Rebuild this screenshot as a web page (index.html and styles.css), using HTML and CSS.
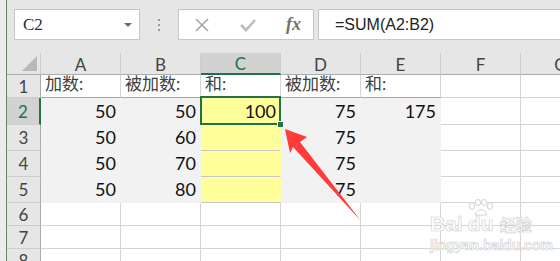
FILE: index.html
```html
<!DOCTYPE html>
<html lang="zh-CN">
<head>
    <meta charset="UTF-8">
    <title>SUM - 工作表</title>
    <link rel="stylesheet" href="styles.css">
</head>
<body>
    <div class="app">
        <div class="edge"></div>
        <div class="main">
            <div class="toolbar">
                <div class="name-box">
                    <span>C2</span>
                    <span class="drop"></span>
                </div>
                <div class="grip"><i></i><i></i><i></i></div>
                <div class="buttons">
                    <svg class="ico" width="14" height="14" viewBox="0 0 14 14">
                        <path d="M1 1 L13 13 M13 1 L1 13" stroke="#a6a6a6" stroke-width="1.6" fill="none"/>
                    </svg>
                    <svg class="ico" width="16" height="14" viewBox="0 0 16 14">
                        <path d="M1 7 L6 12 L15 2" stroke="#bcbcbc" stroke-width="2.6" fill="none"/>
                    </svg>
                    <span class="fx">fx</span>
                </div>
                <div class="formula">=SUM(A2:B2)</div>
            </div>

            <div class="sheet">
                <!-- column headers -->
                <div class="hd corner">
                    <svg width="15" height="15" viewBox="0 0 15 15"><polygon points="15,0 15,15 0,15" fill="#b8b8b8"/></svg>
                </div>
                <div class="hd">A</div>
                <div class="hd">B</div>
                <div class="hd on">C</div>
                <div class="hd">D</div>
                <div class="hd">E</div>
                <div class="hd">F</div>
                <div class="hd">G</div>

                <!-- row 1 -->
                <div class="rh">1</div>
                <div class="c lbl top">加数:</div>
                <div class="c lbl top">被加数:</div>
                <div class="c lbl top">和:</div>
                <div class="c lbl top">被加数:</div>
                <div class="c lbl top">和:</div>
                <div class="c"></div>
                <div class="c"></div>

                <!-- row 2 -->
                <div class="rh on">2</div>
                <div class="c fill num">50</div>
                <div class="c fill num">50</div>
                <div class="c yel num sel">100</div>
                <div class="c fill num">75</div>
                <div class="c fill num">175</div>
                <div class="c"></div>
                <div class="c"></div>

                <!-- row 3 -->
                <div class="rh">3</div>
                <div class="c fill num">50</div>
                <div class="c fill num">60</div>
                <div class="c yel"></div>
                <div class="c fill num">75</div>
                <div class="c fill"></div>
                <div class="c"></div>
                <div class="c"></div>

                <!-- row 4 -->
                <div class="rh">4</div>
                <div class="c fill num">50</div>
                <div class="c fill num">70</div>
                <div class="c yel"></div>
                <div class="c fill num">75</div>
                <div class="c fill"></div>
                <div class="c"></div>
                <div class="c"></div>

                <!-- row 5 -->
                <div class="rh">5</div>
                <div class="c fill num">50</div>
                <div class="c fill num">80</div>
                <div class="c yel"></div>
                <div class="c fill num">75</div>
                <div class="c fill"></div>
                <div class="c"></div>
                <div class="c"></div>

                <!-- rows 6-8 -->
                <div class="rh">6</div>
                <div class="c"></div><div class="c"></div><div class="c"></div><div class="c"></div>
                <div class="c"></div><div class="c"></div><div class="c"></div>

                <div class="rh">7</div>
                <div class="c"></div><div class="c"></div><div class="c"></div><div class="c"></div>
                <div class="c"></div><div class="c"></div><div class="c"></div>

                <div class="rh">8</div>
                <div class="c"></div><div class="c"></div><div class="c"></div><div class="c"></div>
                <div class="c"></div><div class="c"></div><div class="c"></div>
            </div>
        </div>

        <!-- red pointer drawn over the sheet -->
        <svg class="arrow" width="560" height="261" viewBox="0 0 560 261">
            <polygon points="285,129 307,137 300,142 361,221 293,147 290,153" fill="#ff3b3b"/>
        </svg>

        <div class="watermark">
            <div class="wm-logo">
                <span>Bai</span>
                <span class="paw-du">
                    <svg class="paw" width="28" height="17" viewBox="0 0 28 17">
                        <ellipse cx="5" cy="7" rx="2.6" ry="3.4" />
                        <ellipse cx="11" cy="3.5" rx="2.6" ry="3" />
                        <ellipse cx="17" cy="3.5" rx="2.6" ry="3" />
                        <ellipse cx="23" cy="7" rx="2.6" ry="3.4" />
                        <path d="M8 16 C10 9 18 9 20 16 Z" />
                    </svg>
                    <span>du</span>
                </span>
                <span class="wm-cn">经验</span>
            </div>
            <div class="wm-url">jingyan.baidu.com</div>
        </div>
    </div>
</body>
</html>
```

FILE: styles.css
```css
body {
    margin: 0;
    background-color: #e6e6e6;
    font-family: "Lato", "Noto Sans CJK SC", sans-serif;
}
.app {
    position: relative;
    display: flex;
    width: 560px;
    height: 261px;
    overflow: hidden;
}
.edge {
    flex: none;
    width: 6px;
    background: #ececec;
    border-right: 1px solid #5d8a6b;
}
.main {
    flex: 1;
    min-width: 0;
}

/* formula bar */
.toolbar {
    display: flex;
    align-items: flex-start;
    height: 53px;
    padding: 9px 0 0 7px;
    box-sizing: border-box;
}
.name-box {
    display: flex;
    align-items: center;
    justify-content: space-between;
    width: 126px;
    height: 31px;
    padding: 0 7px 0 8px;
    box-sizing: border-box;
    background: white;
    border: 1px solid #c6c6c6;
    font-family: "Liberation Serif", serif;
    font-size: 17px;
    color: #2a2a3a;
}
.drop {
    width: 0;
    height: 0;
    border-left: 4px solid transparent;
    border-right: 4px solid transparent;
    border-top: 4px solid #6e6e6e;
}
.grip {
    display: flex;
    flex-direction: column;
    gap: 3px;
    margin: 10px 0 0 18px;
}
.grip i {
    display: block;
    width: 2px;
    height: 2px;
    background: #9a9a9a;
}
.buttons {
    display: flex;
    align-items: center;
    width: 136px;
    height: 31px;
    margin-left: 18px;
    padding-left: 16px;
    box-sizing: border-box;
    background: white;
    border: 1px solid #c6c6c6;
}
.ico {
    display: block;
}
.ico + .ico {
    margin-left: 31px;
}
.fx {
    margin-left: 30px;
    font-family: "Liberation Serif", serif;
    font-style: italic;
    font-weight: bold;
    font-size: 18px;
    color: #707070;
}
.formula {
    flex: 1;
    height: 31px;
    margin: 0 -10px 0 4px;
    padding-left: 16px;
    box-sizing: border-box;
    background: white;
    border: 1px solid #c6c6c6;
    font-family: "Liberation Sans", sans-serif;
    font-size: 16px;
    line-height: 30px;
    color: #222;
}

/* worksheet */
.sheet {
    display: grid;
    grid-template-columns: 34px repeat(7, 80px);
    grid-template-rows: 22px 23px 27px 26px 26px 26px 23px 23px 23px;
    background: white;
}
.hd, .rh {
    display: flex;
    align-items: center;
    justify-content: center;
    box-sizing: border-box;
    background: #e6e6e6;
    color: #444;
    font-size: 17px;
}
.hd {
    border-right: 1px solid #cdcdcd;
    border-bottom: 1px solid #ababab;
    padding-top: 1px;
}
.rh {
    border-right: 1px solid #ababab;
    border-bottom: 1px solid #cdcdcd;
}
.corner {
    align-items: flex-end;
    justify-content: flex-end;
    padding: 0 3px 3px 0;
}
.hd.on {
    background: #d2d2d2;
    color: #217346;
    border-bottom: 2px solid #217346;
}
.rh.on {
    background: #d2d2d2;
    color: #217346;
    border-right: 2px solid #217346;
}
.c {
    display: flex;
    align-items: flex-end;
    box-sizing: border-box;
    padding: 0 4px 2px 4px;
    border-right: 1px solid #d4d4d4;
    border-bottom: 1px solid #d4d4d4;
    font-size: 18px;
    line-height: 22px;
    color: #111;
    white-space: nowrap;
}
.lbl {
    font-size: 17px;
    color: #404040;
}
.top {
    border-bottom-color: #8ea9db;
}
.num {
    justify-content: flex-end;
}
.fill {
    background: #f2f2f2;
    border-color: #f2f2f2;
}
.yel {
    background: #ffff9b;
    border-right-color: #ffff9b;
    border-bottom-color: #c6c6c6;
}
.sel {
    position: relative;
}
.sel::after {
    content: "";
    position: absolute;
    top: -2px;
    left: -1px;
    right: -1px;
    bottom: -1px;
    border: 2px solid #217346;
}
.sel::before {
    content: "";
    position: absolute;
    right: -4px;
    bottom: -4px;
    width: 5px;
    height: 5px;
    background: #217346;
    border: 1px solid white;
    z-index: 1;
}

/* overlays */
.arrow {
    position: absolute;
    top: 0;
    left: 0;
    pointer-events: none;
}
.watermark {
    position: absolute;
    left: 430px;
    top: 199px;
    color: white;
    -webkit-text-stroke: 0.7px #d2d2d2;
    font-family: "Liberation Sans", sans-serif;
}
.wm-logo {
    display: flex;
    align-items: flex-end;
    font-size: 21px;
    font-weight: bold;
    line-height: 18px;
}
.paw-du {
    display: flex;
    flex-direction: column;
    align-items: center;
    margin-left: 4px;
}
.paw {
    display: block;
    margin-bottom: -1px;
    fill: white;
    stroke: #d2d2d2;
    stroke-width: 1;
}
.wm-cn {
    margin-left: 5px;
    font-family: "Noto Sans CJK SC", sans-serif;
    font-size: 16px;
}
.wm-url {
    margin-top: 4px;
    font-size: 14px;
    font-weight: bold;
}
```
